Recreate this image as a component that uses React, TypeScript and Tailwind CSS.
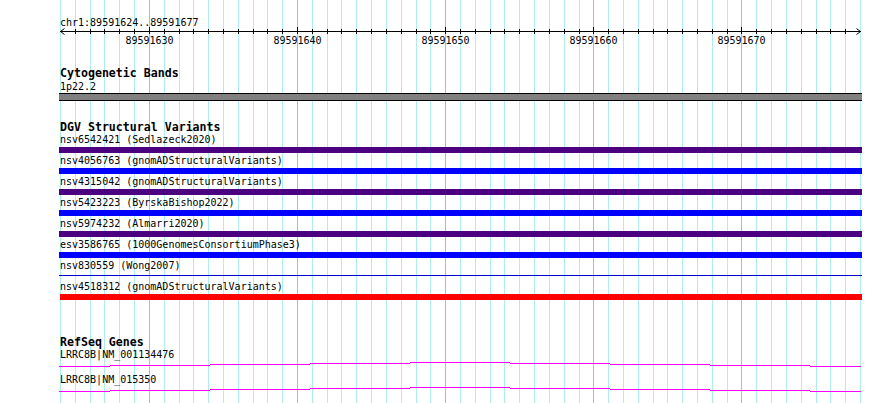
import React from "react";

const START = 89591624;
const BASES = 54;
const PX = 800 / BASES;

const gridX = (i: number) => Math.round(60 + i * PX);

const variants = [
  { id: "nsv6542421", source: "Sedlazeck2020", bar: "purple" },
  { id: "nsv4056763", source: "gnomADStructuralVariants", bar: "blue" },
  { id: "nsv4315042", source: "gnomADStructuralVariants", bar: "purple" },
  { id: "nsv5423223", source: "ByrskaBishop2022", bar: "blue" },
  { id: "nsv5974232", source: "Almarri2020", bar: "purple" },
  { id: "esv3586765", source: "1000GenomesConsortiumPhase3", bar: "blue" },
  { id: "nsv830559", source: "Wong2007", bar: "thin" },
  { id: "nsv4518312", source: "gnomADStructuralVariants", bar: "red" },
];

// intron "hat" seen from very close: 1px steps every 100px
const hat = [
  [0, 51, 5],
  [51, 151, 4],
  [151, 251, 3],
  [251, 351, 2],
  [351, 451, 1],
  [451, 551, 2],
  [551, 651, 3],
  [651, 751, 4],
  [751, 802, 5],
];

const mono = "font-['DejaVu_Sans_Mono',monospace]";

const Grid = () => (
  <svg className="absolute inset-0" width={890} height={403}>
    {Array.from({ length: BASES + 1 }, (_, i) => {
      const major = (START + i) % 10 === 0;
      return (
        <line
          key={i}
          x1={gridX(i) + 0.5}
          x2={gridX(i) + 0.5}
          y1={0}
          y2={403}
          stroke={major ? "#8cc6e4" : "#aeeeee"}
          strokeWidth={1}
        />
      );
    })}
  </svg>
);

const Ruler = () => (
  <div className="relative h-[20px]">
    <svg className="absolute -top-[3px] left-0" width={803} height={10}>
      <line x1={1} x2={802} y1={5.5} y2={5.5} stroke="#000" strokeWidth={1} />
      <polyline points="5.5,2.5 1.5,5.5 5.5,8.5" fill="none" stroke="#000" strokeWidth={1} />
      <polyline points="797.5,2.5 801.5,5.5 797.5,8.5" fill="none" stroke="#000" strokeWidth={1} />
      {Array.from({ length: BASES - 1 }, (_, k) => {
        const i = k + 1;
        const major = (START + i) % 10 === 0;
        const x = gridX(i) - 59 + 0.5;
        return (
          <line key={i} x1={x} x2={x} y1={major ? 1 : 3} y2={8} stroke="#000" strokeWidth={1} />
        );
      })}
    </svg>
    {Array.from({ length: BASES + 1 }, (_, i) => i)
      .filter((i) => (START + i) % 10 === 0)
      .map((i) => (
        <span
          key={i}
          className="absolute top-[5px] -translate-x-1/2 text-[10px] leading-[13px] text-black"
          style={{ left: gridX(i) - 59 + 0.5 }}
        >
          {START + i}
        </span>
      ))}
  </div>
);

const barClass: Record<string, string> = {
  purple: "h-[6px] bg-[#4b0082]",
  blue: "h-[6px] bg-[#0000ff]",
  red: "ml-px h-[6px] bg-[#ff0000]",
};

const GeneLine = () => (
  <svg width={803} height={12} className="block">
    {hat.map(([a, b, y]) => (
      <rect key={a} x={a} y={y} width={b - a} height={1} fill="#ff00ff" />
    ))}
  </svg>
);

export default function App() {
  return (
    <div className={`relative h-[403px] w-[890px] overflow-hidden bg-white text-black ${mono}`}>
      <Grid />
      <div className="relative w-[862px] pl-[59px]">
        <div className="h-[29px] pt-[16px] pl-px text-[10px] leading-[13px]">
          chr1:89591624..89591677
        </div>
        <Ruler />

        {/* Cytogenetic Bands */}
        <div className="mt-[18px] pl-px text-[11.6px] font-bold leading-[13px]">Cytogenetic Bands</div>
        <div className="pl-px text-[10px] leading-[13px]">1p22.2</div>
        <div className="h-[8px] border-y border-black bg-[#808080]" />

        {/* DGV Structural Variants */}
        <div className="mt-[20px] h-[12px] pl-px text-[11.6px] font-bold leading-[12px]">
          DGV Structural Variants
        </div>
        <div className="flex flex-col">
          {variants.map((v) => (
            <div key={v.id} className="h-[21px]">
              <div className="h-[14px] whitespace-pre pl-px text-[10px] leading-[13px]">
                {v.id} ({v.source})
              </div>
              {v.bar === "thin" ? (
                <div className="h-[6px] pt-[2px]">
                  <div className="h-px bg-[#0000cc]" />
                </div>
              ) : (
                <div className={barClass[v.bar]} />
              )}
            </div>
          ))}
        </div>

        {/* RefSeq Genes */}
        <div className="mt-[35px] h-[12px] pl-px text-[11.6px] font-bold leading-[13px]">RefSeq Genes</div>
        <div className="h-[13px] pl-px text-[10px] leading-[13px]">LRRC8B|NM_001134476</div>
        <GeneLine />
        <div className="h-[13px] pl-px text-[10px] leading-[13px]">LRRC8B|NM_015350</div>
        <GeneLine />
      </div>
    </div>
  );
}
